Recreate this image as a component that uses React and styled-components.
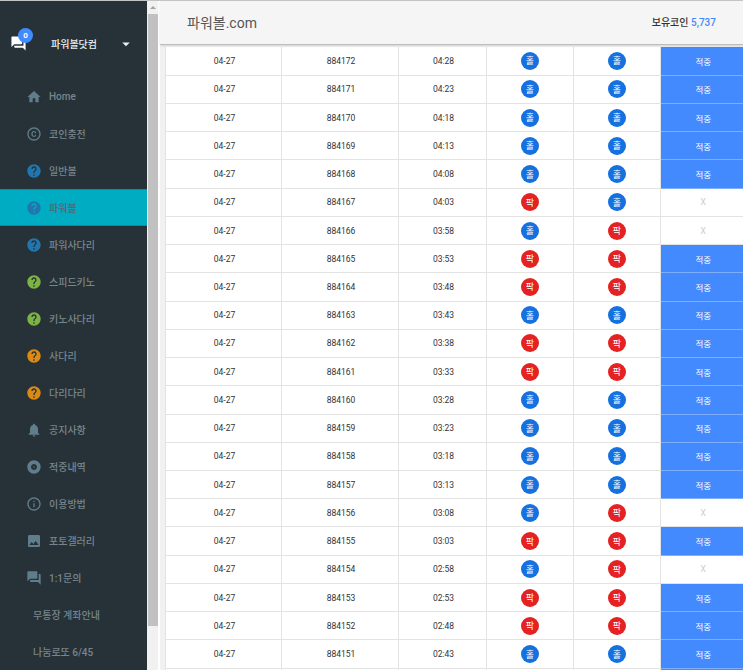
import React from "react";
import styled, { createGlobalStyle } from "styled-components";
import {
  MdHome, MdCopyright, MdHelp, MdNotifications, MdAlbum, MdInfoOutline, MdPhoto, MdQuestionAnswer, MdArrowDropDown,
} from "react-icons/md";

const Global = createGlobalStyle`
  html, body { margin: 0; padding: 0; height: 100%; overflow: hidden; background: #fff; }
  body { font-family: Roboto, "Noto Sans CJK KR", sans-serif; }
  * { box-sizing: border-box; }
`;

const Page = styled.div`
  display: flex;
  width: 743px;
  height: 670px;
  overflow: hidden;
  border-top: 1px solid #c4c4c4;
`;

const Sidebar = styled.aside`
  flex: 0 0 147px;
  background: #263238;
  display: flex;
  flex-direction: column;
`;

const Brand = styled.div`
  height: 77px;
  display: flex;
  align-items: center;
  padding: 8px 0 0 10px;
  color: #fff;
`;

const BrandIcon = styled.div`
  position: relative;
  width: 17px;
  height: 17px;
  display: flex;
  font-size: 17px;
`;

const Badge = styled.span`
  position: absolute;
  top: -7px;
  left: 8px;
  width: 15px;
  height: 15px;
  border-radius: 50%;
  background: #448aff;
  color: #fff;
  font-size: 8px;
  font-weight: 700;
  display: flex;
  align-items: center;
  justify-content: center;
`;

const BrandName = styled.span`
  margin-left: 24px;
  width: 66px;
  font-size: 10px;
  font-weight: 500;
  color: #eceff1;
`;

const Caret = styled.span`
  display: flex;
  font-size: 18px;
  color: #eceff1;
`;

const Nav = styled.nav`
  display: flex;
  flex-direction: column;
`;

const NavItem = styled.div`
  height: 37px;
  display: flex;
  align-items: center;
  padding-left: ${(p) => (p.$plain ? 33 : 27)}px;
  font-size: 10px;
  font-weight: 500;
  color: ${(p) => (p.$active ? "#4f6a76" : "#78858b")};
  background: ${(p) => (p.$active ? "#00acc1" : "transparent")};
  border-top: ${(p) => (p.$active ? "1px solid #0a8c9e" : "none")};
  border-bottom: ${(p) => (p.$active ? "1px solid #0a8c9e" : "none")};
`;

const NavIcon = styled.span`
  flex: 0 0 23px;
  display: flex;
  font-size: 16px;
  margin-left: -1px;
  color: ${(p) => p.$color || "#607d8b"};
`;

const Track = styled.div`
  flex: 0 0 11px;
  background: #f1f1f1;
  display: flex;
  flex-direction: column;
  align-items: stretch;
`;

const ArrowBox = styled.div`
  height: 13px;
  display: flex;
  align-items: center;
  justify-content: center;
  &::after {
    content: "";
    border-left: 3px solid transparent;
    border-right: 3px solid transparent;
    border-bottom: 3px solid #a3a3a3;
  }
`;

const Thumb = styled.div`
  height: 612px;
  margin-left: 1px;
  background: #c1c1c1;
`;

const Main = styled.main`
  flex: 1;
  min-width: 0;
  display: flex;
  flex-direction: column;
  margin-left: 2px;
  background: #f1f1f1;
`;

const Header = styled.header`
  position: relative;
  z-index: 1;
  flex: 0 0 44px;
  background: #f5f5f5;
  border-bottom: 1px solid #bdbdbd;
  box-shadow: 0 1px 2px rgba(0, 0, 0, 0.12);
  display: flex;
  align-items: center;
  justify-content: space-between;
  padding: 0 27px 2px 27px;
`;

const Title = styled.h1`
  margin: 0;
  font-family: Roboto, "Noto Sans CJK KR", sans-serif;
  font-size: 14px;
  font-weight: 400;
  color: #555;
`;

const Coins = styled.div`
  font-size: 10px;
  font-weight: 500;
  color: #333;
`;

const CoinValue = styled.span`
  color: #448aff;
`;

const TableWrap = styled.div`
  flex: 1;
  padding: 2px 0 0 5px;
  overflow: hidden;
`;

const Table = styled.table`
  width: 578px;
  table-layout: fixed;
  border-collapse: collapse;
  background: #fff;
`;

const Cell = styled.td`
  height: 28.24px;
  padding: 0 0 0 2px;
  text-align: center;
  vertical-align: middle;
  font-size: 8.5px;
  color: #333;
  border: 1px solid #e3e3e3;
  border-top: none;
  border-right: ${(p) => (p.$last ? "none" : "1px solid #e3e3e3")};
`;

const BallCell = styled(Cell)`
  padding: 0;
`;

const ResultCell = styled(Cell)`
  padding: 0 0 0 2px;
  background: ${(p) => (p.$hit ? "#448aff" : "#fff")};
  color: ${(p) => (p.$hit ? "#fff" : "#ccc")};
  border-bottom-color: ${(p) => (p.$hit ? "#7fadff" : "#e3e3e3")};
`;

const Ball = styled.span`
  display: inline-flex;
  width: 18px;
  height: 18px;
  border-radius: 50%;
  align-items: center;
  justify-content: center;
  font-size: 9px;
  color: #fff;
  background: ${(p) => (p.$odd ? "#e52222" : "#1570e0")};
  vertical-align: middle;
`;

const nav = [
  { label: "Home", Icon: MdHome },
  { label: "코인충전", Icon: MdCopyright },
  { label: "일반볼", Icon: MdHelp, color: "#2276b0" },
  { label: "파워볼", Icon: MdHelp, color: "#2276b0", active: true },
  { label: "파워사다리", Icon: MdHelp, color: "#2276b0" },
  { label: "스피드키노", Icon: MdHelp, color: "#7cb342" },
  { label: "키노사다리", Icon: MdHelp, color: "#7cb342" },
  { label: "사다리", Icon: MdHelp, color: "#dc8a14" },
  { label: "다리다리", Icon: MdHelp, color: "#dc8a14" },
  { label: "공지사항", Icon: MdNotifications },
  { label: "적중내역", Icon: MdAlbum },
  { label: "이용방법", Icon: MdInfoOutline },
  { label: "포토갤러리", Icon: MdPhoto },
  { label: "1:1문의", Icon: MdQuestionAnswer },
  { label: "무통장 계좌안내", plain: true },
  { label: "나눔로또 6/45", plain: true },
];

const O = "홀", E = "팍";
const rows = [
  [884172, "04:28", O, O],
  [884171, "04:23", O, O],
  [884170, "04:18", O, O],
  [884169, "04:13", O, O],
  [884168, "04:08", O, O],
  [884167, "04:03", E, O],
  [884166, "03:58", O, E],
  [884165, "03:53", E, E],
  [884164, "03:48", E, E],
  [884163, "03:43", O, O],
  [884162, "03:38", E, E],
  [884161, "03:33", E, E],
  [884160, "03:28", O, O],
  [884159, "03:23", O, O],
  [884158, "03:18", O, O],
  [884157, "03:13", O, O],
  [884156, "03:08", O, E],
  [884155, "03:03", E, E],
  [884154, "02:58", O, E],
  [884153, "02:53", E, E],
  [884152, "02:48", E, E],
  [884151, "02:43", O, O],
];

const widths = [116, 117, 88, 87, 87, 83];

export default function App() {
  return (
    <>
      <Global />
      <Page>
        <Sidebar>
          <Brand>
            <BrandIcon>
              <MdQuestionAnswer />
              <Badge>0</Badge>
            </BrandIcon>
            <BrandName>파워볼닷컴</BrandName>
            <Caret><MdArrowDropDown /></Caret>
          </Brand>
          <Nav>
            {nav.map(({ label, Icon, color, active, plain }) => (
              <NavItem key={label} $active={active} $plain={plain}>
                {Icon && <NavIcon $color={color}><Icon /></NavIcon>}
                {label}
              </NavItem>
            ))}
          </Nav>
        </Sidebar>
        <Track>
          <ArrowBox />
          <Thumb />
        </Track>
        <Main>
          <Header>
            <Title>파워볼.com</Title>
            <Coins>보유코인 <CoinValue>5,737</CoinValue></Coins>
          </Header>
          <TableWrap>
            <Table>
              <colgroup>
                {widths.map((w, i) => <col key={i} style={{ width: w }} />)}
              </colgroup>
              <tbody>
                {rows.map(([id, time, a, b]) => (
                  <tr key={id}>
                    <Cell>04-27</Cell>
                    <Cell>{id}</Cell>
                    <Cell>{time}</Cell>
                    <BallCell><Ball $odd={a === E}>{a}</Ball></BallCell>
                    <BallCell><Ball $odd={b === E}>{b}</Ball></BallCell>
                    <ResultCell $last $hit={a === b}>{a === b ? "적중" : "X"}</ResultCell>
                  </tr>
                ))}
                <tr>
                  <Cell />
                  <Cell />
                  <Cell />
                  <BallCell />
                  <BallCell />
                  <ResultCell $last $hit />
                </tr>
              </tbody>
            </Table>
          </TableWrap>
        </Main>
      </Page>
    </>
  );
}
